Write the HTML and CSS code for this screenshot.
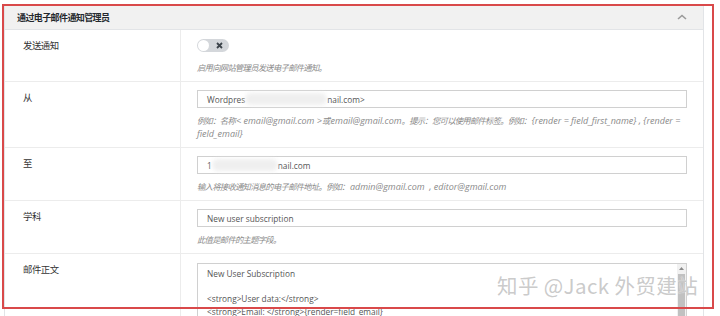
FILE: index.html
```html
<!DOCTYPE html>
<html lang="zh-CN">
<head>
  <meta charset="UTF-8" />
  <meta name="viewport" content="width=device-width, initial-scale=1.0" />
  <title>通过电子邮件通知管理员</title>
  <link rel="stylesheet" href="styles.css">
</head>
<body>
  <div class="page">
    <div class="panel">
      <div class="panel-head">
        <h3>通过电子邮件通知管理员</h3>
        <svg class="chev" width="10" height="6" viewBox="0 0 10 6"><path d="M1 5 L5 1.5 L9 5" fill="none" stroke="#9a9a9a" stroke-width="1.6"/></svg>
      </div>

      <!-- Send notification -->
      <div class="row">
        <div class="label">发送通知</div>
        <div class="field">
          <span class="toggle">
            <span class="knob"></span>
            <svg class="cross" width="7" height="7" viewBox="0 0 7 7"><path d="M1 1 L6 6 M6 1 L1 6" stroke="#3c434a" stroke-width="1.8"/></svg>
          </span>
          <p class="desc"><span class="cn">启用向网站管理员发送电子邮件通知。</span></p>
        </div>
      </div>

      <!-- From -->
      <div class="row">
        <div class="label">从</div>
        <div class="field">
          <div class="input">Wordpres<span class="blur w80"></span>nail.com&gt;</div>
          <p class="desc"><span class="cn">例如：名称</span>&lt; email@gmail.com &gt;<span class="cn">或</span>email@gmail.com<span class="cn">。提示：您可以使用邮件标签。例如：</span>{render = field_first_name} , {render = field_email}</p>
        </div>
      </div>

      <!-- To -->
      <div class="row">
        <div class="label">至</div>
        <div class="field">
          <div class="input">1<span class="blur w64"></span>nail.com</div>
          <p class="desc"><span class="cn">输入将接收通知消息的电子邮件地址。例如：</span>admin@gmail.com&nbsp; , editor@gmail.com</p>
        </div>
      </div>

      <!-- Subject -->
      <div class="row">
        <div class="label">学科</div>
        <div class="field">
          <div class="input">New user subscription</div>
          <p class="desc"><span class="cn">此值是邮件的主题字段。</span></p>
        </div>
      </div>

      <!-- Body -->
      <div class="row">
        <div class="label">邮件正文</div>
        <div class="field">
          <div class="textarea">
            <div class="ta-text">
              <div>New User Subscription</div>
              <div>&nbsp;</div>
              <div>&lt;strong&gt;User data:&lt;/strong&gt;</div>
              <div>&lt;strong&gt;Email: &lt;/strong&gt;{render=field_email}</div>
            </div>
            <div class="scrollbar">
              <svg width="9" height="8" viewBox="0 0 9 8"><path d="M2 6 L4.5 3 L7 6 Z" fill="#8a8a8a"/></svg>
              <span class="thumb"></span>
            </div>
          </div>
        </div>
      </div>
    </div>

    <div class="mark">知乎 @Jack 外贸建站</div>
    <div class="frame"></div>
  </div>
</body>
</html>
```

FILE: styles.css
```css
/* Global Styles */
body {
  margin: 0;
  background: #fff;
  font-family: "Open Sans", "Noto Sans CJK SC", sans-serif;
  color: #333;
  overflow: hidden;
}

.page {
  position: relative;
  width: 720px;
  height: 316px;
  overflow: hidden;
}

/* Panel */
.panel {
  margin: 5px 0 0 4px;
  width: 698px;
  border: 1px solid #e2e4e7;
  border-top: none;
  background: #fff;
}

.panel-head {
  display: flex;
  align-items: center;
  justify-content: space-between;
  height: 24px;
  padding: 0 16px 0 12px;
  background: #f1f1f1;
  border-bottom: 1px solid #e2e4e7;
}

.panel-head h3 {
  margin: 0;
  font-size: 9px;
  letter-spacing: -0.6px;
  font-weight: 700;
  color: #23282d;
  font-family: "Noto Sans CJK SC", sans-serif;
}

/* Rows */
.row {
  display: grid;
  grid-template-columns: 176px 1fr;
  border-bottom: 1px solid #ececec;
}

.label {
  padding: 8px 0 0 18px;
  font-family: "Noto Sans CJK SC", sans-serif;
  font-size: 9.4px;
  letter-spacing: -0.5px;
  line-height: 14px;
  color: #333;
  border-right: 1px solid #ececec;
}

.field {
  padding: 8px 16px 7px 16px;
}

.desc {
  margin: 6px 0 0 0;
  font-size: 9px;
  line-height: 13px;
  font-style: italic;
  color: #8a8a8a;
}

.desc .cn {
  font-family: "Noto Sans CJK SC", sans-serif;
  font-size: 8.3px;
  letter-spacing: -0.7px;
  margin-right: 1px;
}

/* Toggle */
.toggle {
  display: flex;
  align-items: center;
  justify-content: space-between;
  width: 32px;
  height: 13px;
  margin-top: 1px;
  padding: 0 6px 0 1px;
  box-sizing: border-box;
  border-radius: 7px;
  background: #d4d7db;
}

.knob {
  width: 11px;
  height: 11px;
  border-radius: 50%;
  background: #fff;
}

.toggle + .desc {
  margin-top: 9px;
}

/* Inputs */
.input {
  display: flex;
  align-items: center;
  height: 18px;
  padding: 0 9px;
  border: 1px solid #d0d0d0;
  box-sizing: border-box;
  font-size: 8.3px;
  color: #555;
  white-space: nowrap;
}

.blur {
  display: inline-block;
  height: 12px;
  border-radius: 6px;
  background: #efefef;
  filter: blur(2px);
}

.w80 { width: 82px; }
.w64 { width: 66px; }

.textarea {
  display: flex;
  height: 80px;
  margin-top: 1px;
  border: 1px solid #d0d0d0;
  box-sizing: border-box;
}

.ta-text {
  flex: 1;
  padding: 4px 9px;
  font-size: 8.3px;
  line-height: 12.5px;
  color: #555;
}

.scrollbar {
  display: flex;
  flex-direction: column;
  align-items: center;
  width: 9px;
  background: #f1f1f1;
}

.thumb {
  width: 7px;
  flex: 1;
  margin-top: 2px;
  background: #c1c1c1;
}

/* Watermark */
.mark {
  position: absolute;
  left: 497px;
  top: 271px;
  font-family: "Noto Sans CJK SC", sans-serif;
  font-size: 20.5px;
  line-height: 28px;
  letter-spacing: 0.4px;
  color: rgba(196, 196, 196, 0.9);
  text-shadow: 0 0 1px rgba(255, 255, 255, 0.9);
  white-space: nowrap;
}

/* Red highlight frame */
.frame {
  position: absolute;
  left: 2px;
  top: 4px;
  width: 708px;
  height: 301px;
  border: 2px solid #d9494a;
}
```
